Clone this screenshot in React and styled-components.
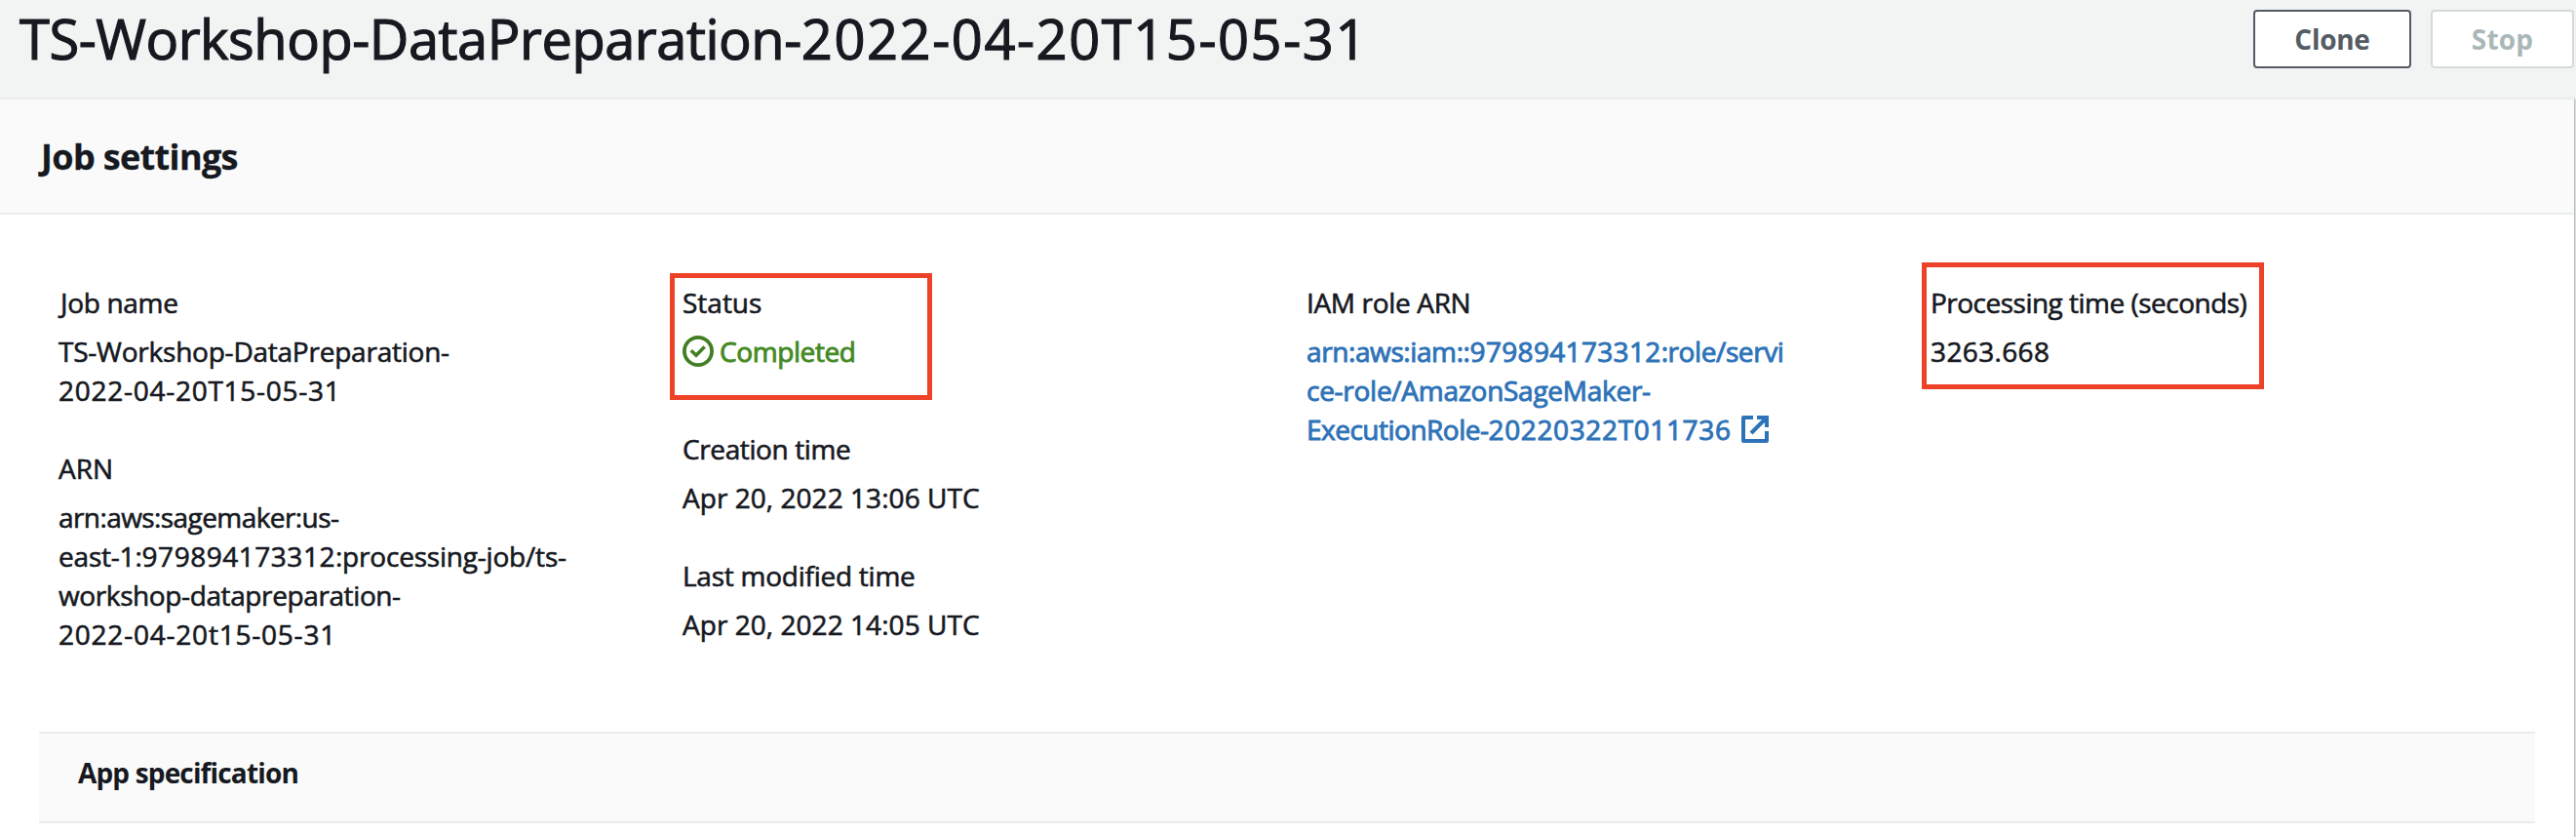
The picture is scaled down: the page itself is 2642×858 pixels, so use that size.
import React from 'react';
import styled, { createGlobalStyle } from 'styled-components';

const GlobalStyle = createGlobalStyle`
  body {
    margin: 0;
    background: #f2f3f3;
    color: #16191f;
    font-family: 'Open Sans', 'Noto Sans', sans-serif;
    font-size: 28px;
    line-height: 40px;
  }
  *, *::before, *::after { box-sizing: border-box; }
`;

const Page = styled.div`
  height: 858px;
  display: flex;
  flex-direction: column;
  overflow: hidden;
`;

const PageHeader = styled.header`
  height: 100px;
  flex: none;
  display: flex;
  justify-content: space-between;
  align-items: flex-start;
  padding: 0 2px 0 20px;
`;

const PageTitle = styled.h1`
  margin: 0;
  font-size: 56px;
  font-weight: 400;
  line-height: 79px;
  white-space: nowrap;
  -webkit-text-stroke: 1.2px currentColor;
`;

const Actions = styled.div`
  display: flex;
  gap: 20px;
  padding-top: 10px;
`;

const Button = styled.button`
  width: ${(p) => p.$width}px;
  height: 60px;
  padding: 0;
  border: 2px solid ${(p) => (p.disabled ? '#d5dbdb' : '#545b64')};
  border-radius: 4px;
  background: #fff;
  color: ${(p) => (p.disabled ? '#aab7b8' : '#545b64')};
  font: 700 28px/40px 'Open Sans', 'Noto Sans', sans-serif;
`;

const Panel = styled.section`
  flex: 1;
  display: flex;
  flex-direction: column;
  margin-right: 1px;
  border-top: 2px solid #eaeded;
  border-right: 1px solid #b9c1c4;
  background: #fff;
  box-shadow: 1px 2px 0 #d8dddd;
`;

const PanelHeader = styled.div`
  height: 118px;
  flex: none;
  display: flex;
  align-items: center;
  padding: 2px 40px 0;
  border-bottom: 2px solid #eaeded;
  background: #fafafa;
`;

const PanelTitle = styled.h2`
  margin: 0;
  padding-left: 2px;
  font-size: 36px;
  line-height: 50px;
  -webkit-text-stroke: 0.3px currentColor;
`;

const Columns = styled.div`
  height: 530px;
  flex: none;
  display: grid;
  grid-template-columns: repeat(4, 640px);
  padding: 70px 0 0 60px;
`;

const Column = styled.div`
  display: flex;
  flex-direction: column;
  align-items: flex-start;
  gap: 40px;
`;

const Field = styled.div`
  position: relative;
  display: flex;
  flex-direction: column;
  gap: 10px;
  padding-bottom: ${(p) => p.$extra || 0}px;
`;

const Line = styled.div`
  height: 40px;
  white-space: nowrap;
  padding-left: ${(p) => p.$inset || 0}px;
`;

const Run = styled.span`
  letter-spacing: ${(p) => p.$track}px;
`;

const Link = styled.a`
  color: #2e73b8;
  -webkit-text-stroke: 0.9px currentColor;
`;

const Status = styled.div`
  display: flex;
  color: #448a25;
  -webkit-text-stroke: 0.9px currentColor;

  svg { margin: 4px 6px 0 0; }
`;

const Details = styled.div`
  -webkit-text-stroke: 0.6px currentColor;
`;

const Highlight = styled.div`
  position: absolute;
  left: ${(p) => p.$x}px;
  top: ${(p) => p.$y}px;
  width: ${(p) => p.$w}px;
  height: 130px;
  border: 5px solid #ed4228;
  pointer-events: none;
`;

const ExternalSvg = styled.svg`
  margin-left: 10px;
  vertical-align: -3px;
`;

const SubPanel = styled.section`
  height: 94px;
  flex: none;
  margin: 0 40px;
  padding: 20px 40px 0;
  border: solid #eaeded;
  border-width: 2px 0;
  background: #fafafa;
`;

const SubTitle = styled.h3`
  margin: 0;
  font-size: 28px;
  line-height: 40px;
`;

const CheckIcon = () => (
  <svg width="32" height="32" viewBox="0 0 32 32" fill="none" stroke="#417f22">
    <circle cx="16" cy="16" r="14.1" strokeWidth="3.8" />
    <path d="M8.8 15.2 14 20.2 22.6 11.6" strokeWidth="3.6" />
  </svg>
);

const ExternalIcon = () => (
  <ExternalSvg width="28" height="28" viewBox="0 0 28 28" fill="none" stroke="currentColor" strokeWidth="4">
    <path d="M12 2H2V26H26V16" strokeLinejoin="round" />
    <path d="M16 2H26V12" />
    <path d="M10 18 25 3" />
  </ExternalSvg>
);

/* Each line is a list of [text, tracking] runs. */
const Text = ({ runs, inset }) => (
  <Line $inset={inset}>
    {runs.map(([text, track]) => <Run key={text} $track={track}>{text}</Run>)}
  </Line>
);

export default function App() {
  return (
    <>
      <GlobalStyle />
      <Page>
        <PageHeader>
          <PageTitle>
            <Run $track={-0.46}>TS-Workshop-DataPreparation-</Run>
            <Run $track={1.58}>2022-04-20T15-05-31</Run>
          </PageTitle>
          <Actions>
            <Button $width={162}><Run $track={-0.28}>Clone</Run></Button>
            <Button $width={147} disabled><Run $track={0.2}>Stop</Run></Button>
          </Actions>
        </PageHeader>

        <Panel>
          <PanelHeader>
            <PanelTitle><Run $track={-0.65}>Job settings</Run></PanelTitle>
          </PanelHeader>

          <Details>
            <Columns>
              <Column>
                <Field>
                  <Text inset={2} runs={[['Job name', -0.32]]} />
                  <div>
                    <Text runs={[['TS-Workshop-DataPreparation-', -0.23]]} />
                    <Text runs={[['2022-04-20T15-05-31', 0.73]]} />
                  </div>
                </Field>
                <Field>
                  <Text runs={[['ARN', 0]]} />
                  <div>
                    <Text runs={[['arn:aws:sagemaker:us-', -0.58]]} />
                    <Text runs={[['east-1:', -0.2], ['979894173312', 0.52], [':processing-job/ts-', -0.2]]} />
                    <Text runs={[['workshop-datapreparation-', -0.39]]} />
                    <Text runs={[['2022-04-20t15-05-31', 0.78]]} />
                  </div>
                </Field>
              </Column>

              <Column>
                <Field $extra={20}>
                  <Text runs={[['Status', 0]]} />
                  <Status>
                    <CheckIcon />
                    <Text runs={[['Completed', -0.4]]} />
                  </Status>
                  <Highlight $x={-13.5} $y={-10} $w={269} />
                </Field>
                <Field>
                  <Text runs={[['Creation time', -0.39]]} />
                  <Text runs={[['Apr 20, 2022 13:06 UTC', 0.05]]} />
                </Field>
                <Field>
                  <Text runs={[['Last modified time', -0.25]]} />
                  <Text runs={[['Apr 20, 2022 14:05 UTC', 0.05]]} />
                </Field>
              </Column>

              <Column>
                <Field>
                  <Text runs={[['IAM role ARN', -0.34]]} />
                  <Link>
                    <Text runs={[['arn:aws:iam::', -0.4], ['979894173312', 0.33], [':role/servi', -0.4]]} />
                    <Text runs={[['ce-role/AmazonSageMaker-', -0.27]]} />
                    <Line>
                      <Run $track={-0.5}>ExecutionRole-</Run>
                      <Run $track={0.63}>20220322T011736</Run>
                      <ExternalIcon />
                    </Line>
                  </Link>
                </Field>
              </Column>

              <Column>
                <Field>
                  <Text runs={[['Processing time (seconds)', -0.51]]} />
                  <Text runs={[['3263.668', 0.37]]} />
                  <Highlight $x={-9.5} $y={-21} $w={351} />
                </Field>
              </Column>
            </Columns>
          </Details>

          <SubPanel>
            <SubTitle><Run $track={-0.84}>App specification</Run></SubTitle>
          </SubPanel>
        </Panel>
      </Page>
    </>
  );
}
